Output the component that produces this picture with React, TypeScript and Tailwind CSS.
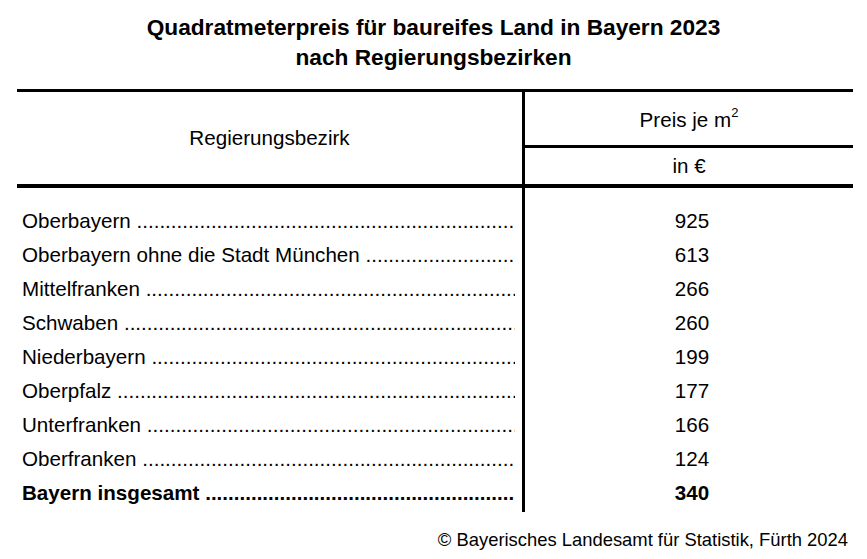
const zeilen = [
  { name: 'Oberbayern', wert: '925' },
  { name: 'Oberbayern ohne die Stadt München', wert: '613' },
  { name: 'Mittelfranken', wert: '266' },
  { name: 'Schwaben', wert: '260' },
  { name: 'Niederbayern', wert: '199' },
  { name: 'Oberpfalz', wert: '177' },
  { name: 'Unterfranken', wert: '166' },
  { name: 'Oberfranken', wert: '124' },
  { name: 'Bayern insgesamt', wert: '340', fett: true },
]

const punkte = '.'.repeat(90)

export default function App() {
  return (
    <div className="w-[867px] h-[559px] bg-white text-black font-['Liberation_Sans',Arial,sans-serif] overflow-hidden">
      {/* Titel */}
      <div className="pt-[12px] text-center font-bold text-[22.7px] leading-[30px] font-['Liberation_Sans_Narrow','Arial_Narrow','Liberation_Sans',sans-serif]">
        <div>Quadratmeterpreis für baureifes Land in Bayern 2023</div>
        <div>nach Regierungsbezirken</div>
      </div>

      <div className="ml-[17px] w-[836px] mt-[17px]">
        {/* Kopf */}
        <div className="flex border-t-[3px] border-b-4 border-black">
          <div className="w-[505px] flex items-center justify-center text-[20.6px]">
            Regierungsbezirk
          </div>
          <div className="flex-1 border-l-[3px] border-black">
            <div className="h-[56px] flex items-center justify-center text-[20.6px] border-b-[3px] border-black pt-[4px]">
              <span>
                Preis je m<span className="text-[13px] relative -top-[10px]">2</span>
              </span>
            </div>
            <div className="h-[36px] flex items-center justify-center text-[20.6px]">
              in €
            </div>
          </div>
        </div>

        {/* Daten */}
        <div className="flex">
          <div className="w-[505px] pt-[16px] pl-[5px] pr-[7px]">
            {zeilen.map((z) => (
              <div
                key={z.name}
                className={`flex h-[34.1px] items-center text-[20.6px] whitespace-nowrap ${z.fett ? 'font-bold' : ''}`}
              >
                <span>{z.name}&nbsp;</span>
                <span className="flex-1 overflow-hidden">{punkte}</span>
              </div>
            ))}
          </div>
          <div className="flex-1 border-l-[3px] border-black pt-[16px] pb-[1px]">
            {zeilen.map((z) => (
              <div
                key={z.name}
                className={`h-[34.1px] flex items-center justify-center pl-[6px] text-[20.6px] ${z.fett ? 'font-bold' : ''}`}
              >
                {z.wert}
              </div>
            ))}
          </div>
        </div>
      </div>

      <div className="w-[848px] text-right text-[18.4px] mt-[14px]">
        © Bayerisches Landesamt für Statistik, Fürth 2024
      </div>
    </div>
  )
}
